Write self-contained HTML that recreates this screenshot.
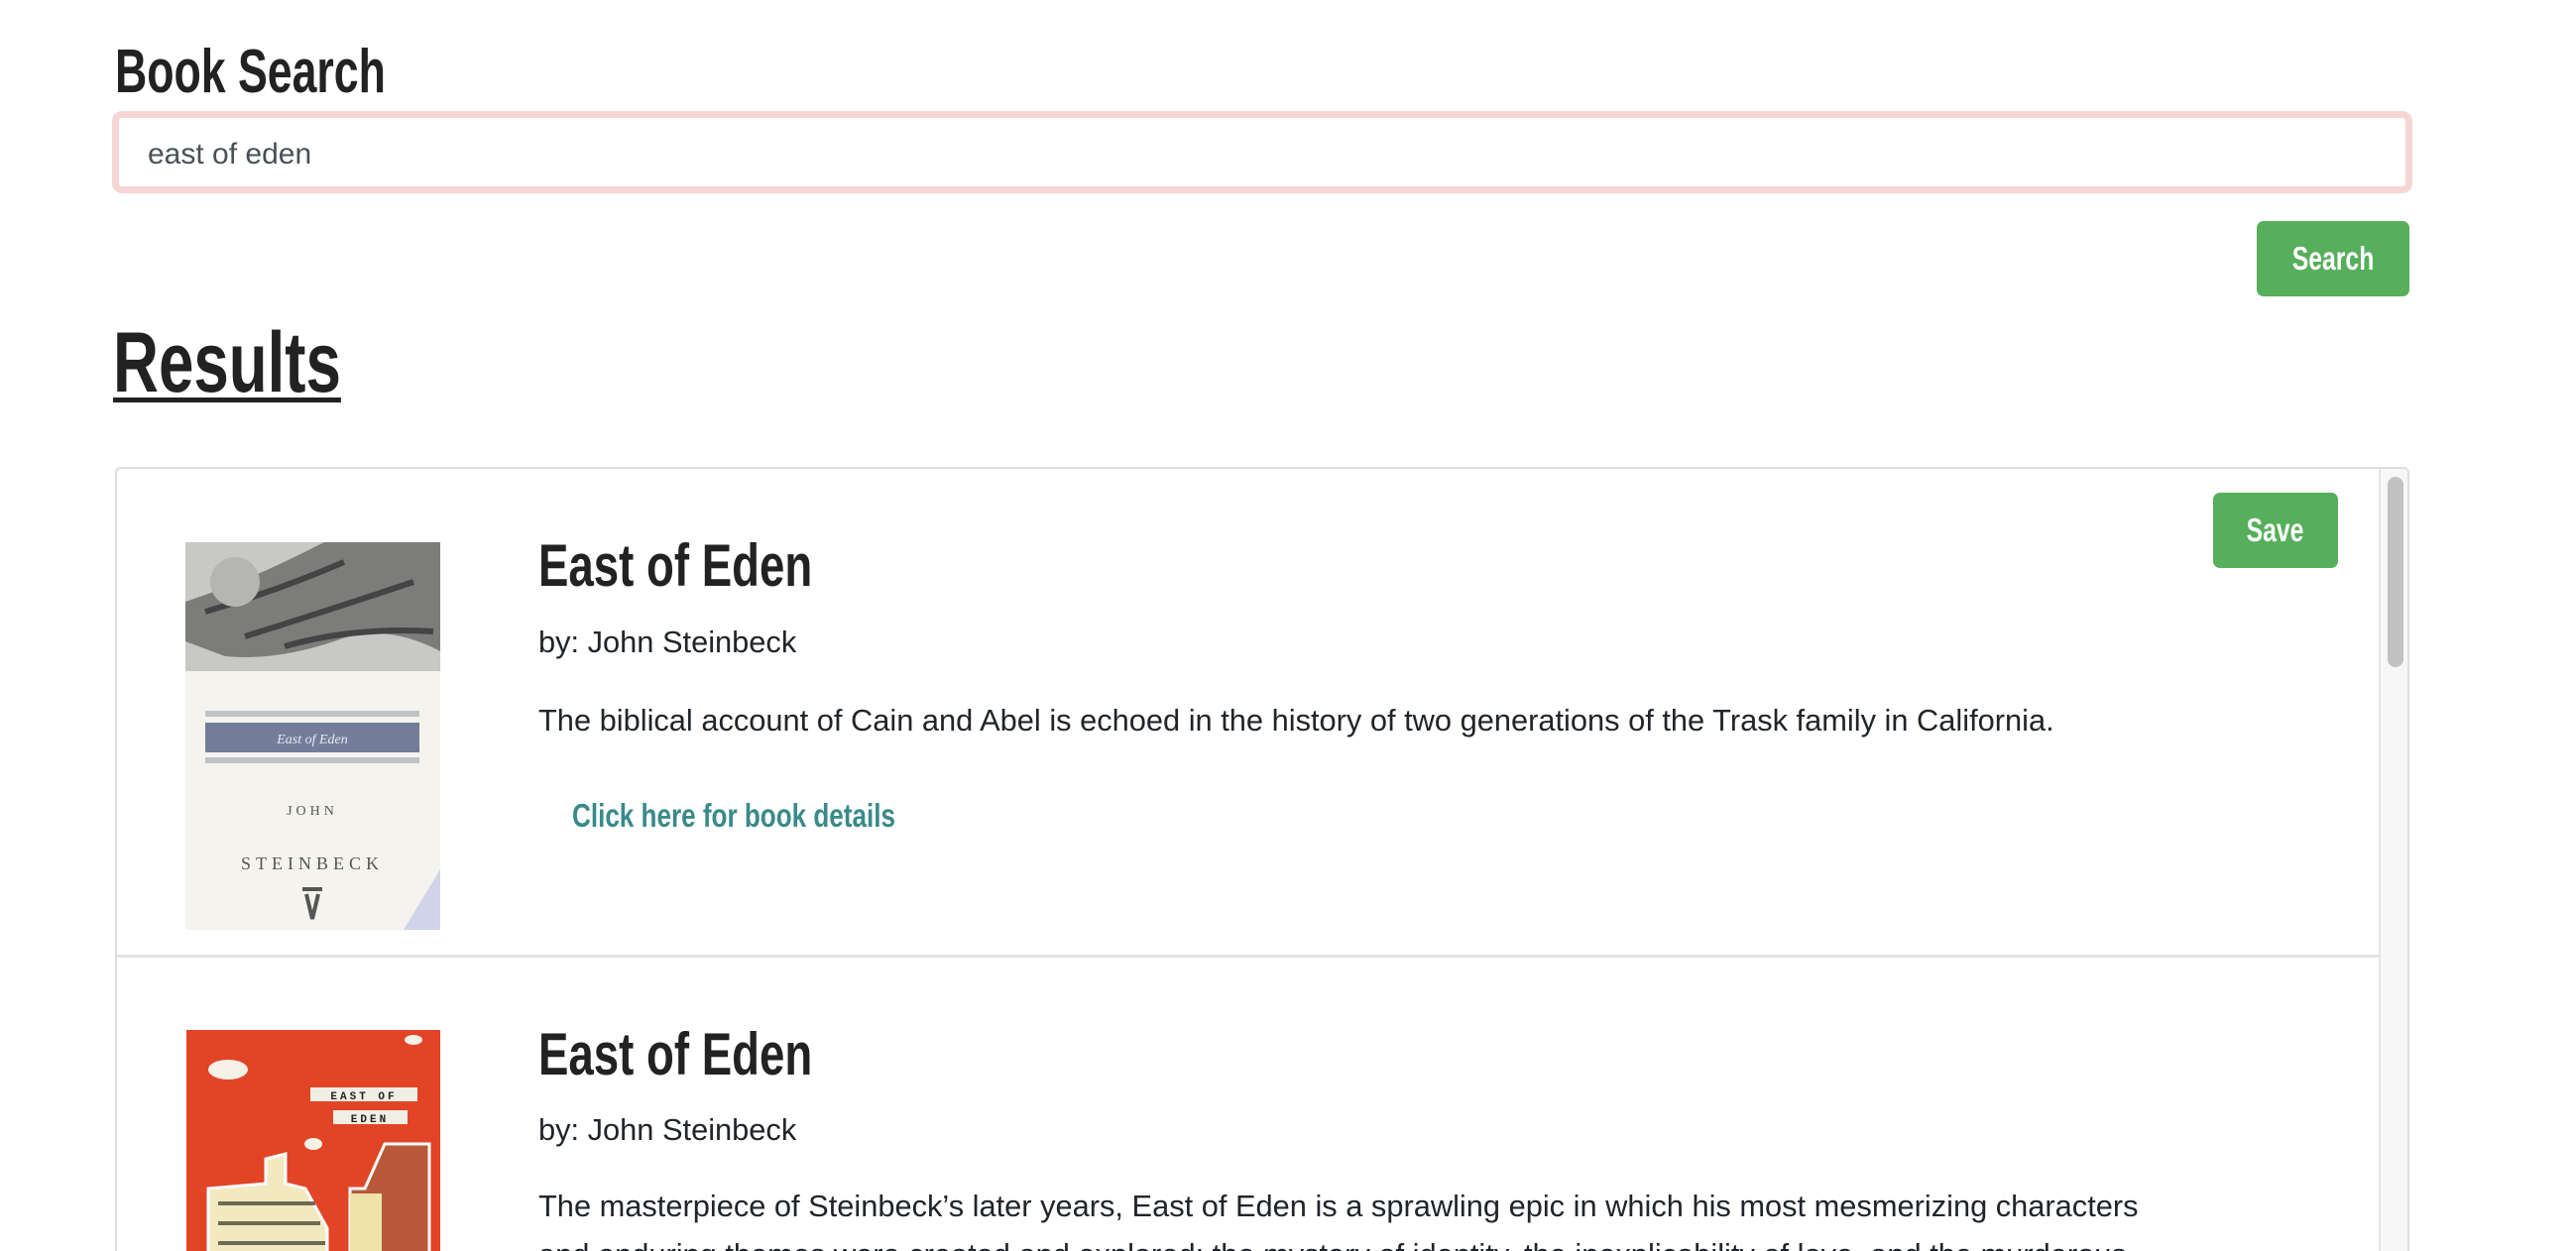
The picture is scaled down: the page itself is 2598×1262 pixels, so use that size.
<!DOCTYPE html>
<html><head><meta charset="utf-8"><style>
*{box-sizing:border-box;margin:0;padding:0}
html,body{width:2598px;height:1262px;overflow:hidden;background:#fff}
body{position:relative;font-family:"Liberation Sans",sans-serif;color:#212529}
.a{position:absolute;white-space:nowrap}
.cond{font-family:"Liberation Sans Narrow","Liberation Sans",sans-serif;font-weight:bold;transform-origin:0 0}
.btn{position:absolute;background:#57ae5b;border-radius:7px;color:#fff;display:flex;align-items:center;justify-content:center;font-size:33px}
.btn span{display:inline-block;transform:scaleX(0.75);font-weight:bold}
.body{font-size:30.8px;color:#212529}
</style></head><body>
<div class="a cond" style="left:116px;top:36px;font-size:62px;line-height:74px;color:#222;transform:scaleX(0.72)">Book Search</div>
<div class="a" style="left:113px;top:112px;width:2320px;height:83px;border:7px solid #f5d6d5;border-radius:10px;background:#fff"></div>
<div class="a" style="left:149px;top:136px;font-size:30px;line-height:40px;color:#495057">east of eden</div>
<div class="btn" style="left:2276px;top:223px;width:154px;height:76px"><span>Search</span></div>
<div class="a cond" style="left:114px;top:316px;font-size:86px;line-height:100px;color:#222;text-decoration:underline;text-decoration-thickness:5px;text-underline-offset:6px;transform:scaleX(0.74)">Results</div>

<div class="a" style="left:116px;top:471px;width:2314px;height:820px;border:2px solid #ddd;border-radius:6px;overflow:hidden">
  <div class="a" style="left:2281px;top:0;width:31px;height:820px;background:#f7f7f7;border-left:2px solid #e6e6e6"></div>
  <div class="a" style="left:2290px;top:8px;width:16px;height:192px;background:#c1c1c1;border-radius:8px"></div>
  <div class="a" style="left:0;top:490px;width:2281px;height:3px;background:#e3e3e3"></div>
</div>

<!-- item 1 -->
<svg class="a" style="left:187px;top:547px" width="257" height="391" viewBox="0 0 257 391">
  <rect width="257" height="391" fill="#f4f3ee"/>
  <rect width="257" height="130" fill="#c8c8c6"/>
  <path d="M0 60 Q60 40 120 10 L140 0 L257 0 L257 110 Q200 80 150 100 Q90 120 40 115 L0 100Z" fill="#7c7c7b"/>
  <path d="M20 70 Q90 50 160 20 M60 95 Q140 70 230 40 M100 105 Q170 85 250 90" stroke="#444" stroke-width="6" fill="none"/>
  <circle cx="50" cy="40" r="25" fill="#b5b5b2"/>
  <rect x="20" y="170" width="216" height="6" fill="#bfc2c5"/>
  <rect x="20" y="182" width="216" height="30" fill="#737d9a"/>
  <text x="128" y="203" font-size="14" fill="#e8e8f0" text-anchor="middle" font-family="Liberation Serif" font-style="italic">East of Eden</text>
  <rect x="20" y="217" width="216" height="6" fill="#bfc2c5"/>
  <text x="128" y="275" font-size="14" fill="#555" text-anchor="middle" font-family="Liberation Serif" letter-spacing="4">JOHN</text>
  <text x="128" y="330" font-size="18" fill="#555" text-anchor="middle" font-family="Liberation Serif" letter-spacing="5">STEINBECK</text>
  <path d="M122 355 L128 380 L134 355 M118 350 L138 350" stroke="#555" stroke-width="4" fill="none"/>
  <path d="M257 330 L257 391 L220 391Z" fill="#cfd4ea"/>
</svg>
<div class="a cond" style="left:543px;top:535px;font-size:60px;line-height:72px;color:#222;transform:scaleX(0.76)">East of Eden</div>
<div class="a body" style="left:543px;top:630px;line-height:36px">by: John Steinbeck</div>
<div class="a body" style="left:543px;top:709px;line-height:36px">The biblical account of Cain and Abel is echoed in the history of two generations of the Trask family in California.</div>
<div class="a cond" style="left:577px;top:804px;font-size:33px;line-height:38px;color:#3a8a8a;transform:scaleX(0.79)">Click here for book details</div>
<div class="btn" style="left:2232px;top:497px;width:126px;height:76px"><span>Save</span></div>

<!-- item 2 -->
<svg class="a" style="left:188px;top:1039px" width="256" height="230" viewBox="0 0 256 230">
  <rect width="256" height="230" fill="#e24525"/>
  <ellipse cx="42" cy="40" rx="20" ry="10" fill="#f6f2e8"/>
  <ellipse cx="229" cy="10" rx="9" ry="5" fill="#f6f2e8"/>
  <ellipse cx="128" cy="115" rx="9" ry="6" fill="#f6f2e8"/>
  <rect x="125" y="58" width="108" height="14" fill="#f1eee6"/>
  <text x="179" y="70" font-size="11" text-anchor="middle" font-family="Liberation Mono" font-weight="bold" letter-spacing="3" fill="#222">EAST OF</text>
  <rect x="148" y="81" width="75" height="14" fill="#f1eee6"/>
  <text x="185" y="93" font-size="11" text-anchor="middle" font-family="Liberation Mono" font-weight="bold" letter-spacing="3" fill="#222">EDEN</text>
  <path d="M22 160 L80 155 L80 130 L100 125 L100 155 L120 160 L142 200 L142 230 L22 230Z" fill="#f3e9c0" stroke="#fff" stroke-width="3"/>
  <path d="M32 175 L130 175 M32 195 L135 195 M32 215 L140 215" stroke="#6c6a55" stroke-width="4"/>
  <path d="M165 160 L180 160 L200 115 L245 115 L245 230 L165 230Z" fill="#b85a3a" stroke="#fff" stroke-width="3"/>
  <rect x="165" y="165" width="32" height="65" fill="#eee3a8"/>
</svg>
<div class="a cond" style="left:543px;top:1028px;font-size:60px;line-height:72px;color:#222;transform:scaleX(0.76)">East of Eden</div>
<div class="a body" style="left:543px;top:1122px;line-height:36px">by: John Steinbeck</div>
<div class="a body" style="left:543px;top:1192px;line-height:49px">The masterpiece of Steinbeck’s later years, East of Eden is a sprawling epic in which his most mesmerizing characters<br>and enduring themes were created and explored: the mystery of identity, the inexplicability of love, and the murderous</div>
</body></html>
